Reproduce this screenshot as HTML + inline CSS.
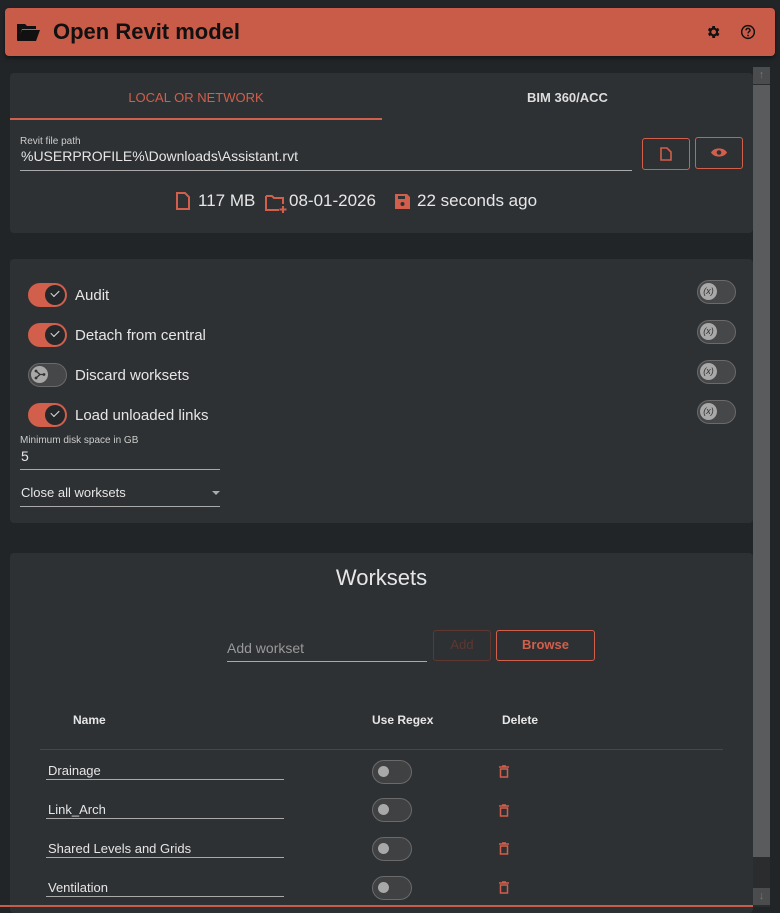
<!DOCTYPE html>
<html><head><meta charset="utf-8"><style>
*{box-sizing:border-box;margin:0;padding:0}
body{width:780px;height:907px;background:#222528;font-family:"Liberation Sans",sans-serif;color:#e6e6e6;position:relative;overflow:hidden}
.a{position:absolute}
.card{position:absolute;background:#2e3134;border-radius:4px}
.hdr{left:5px;top:8px;width:770px;height:48px;background:#c95b49;border-radius:4px;box-shadow:0 2px 4px rgba(0,0,0,.5)}
.red{color:#d15f4b}
.tg{position:absolute;width:39px;height:24px;border-radius:12px}
.on{background:#d15f4b}
.on .c{position:absolute;right:2px;top:2px;width:20px;height:20px;border-radius:50%;background:#25282b}
.on .c::after{content:"";position:absolute;left:6px;top:5px;width:7px;height:4px;border-left:1.5px solid #ddd;border-bottom:1.5px solid #ddd;transform:rotate(-45deg)}
.off{background:#454749;border:1.5px solid #6a6a6a}
.off .k{position:absolute;left:2px;top:2px;width:17px;height:17px;border-radius:50%;background:#a8a8a8;color:#333;font-size:9px;font-style:italic;text-align:center;line-height:17px}
.sm{position:absolute;width:40px;height:24px;border-radius:12px;background:#3f4143;border:1.5px solid #6a6a6a}
.sm .k{position:absolute;left:5px;top:5px;width:11px;height:11px;border-radius:50%;background:#a8a8a8}
.line{position:absolute;height:1px;background:#a9a9a9}
.btn{position:absolute;border:1.5px solid #d15f4b;border-radius:3px}
</style></head><body>
<div class="a hdr">
<svg class="a" style="left:11px;top:14px" width="25" height="20" viewBox="0 0 25 20"><path d="M1 2h8l2 2h9v3H6L2 18H1z M6 8h18l-4 11H1z" fill="#111"/></svg>
<div class="a" style="left:48px;top:11px;font-size:22px;color:#111;font-weight:bold">Open Revit model</div>
<svg class="a" style="left:700px;top:16px" width="16" height="16" viewBox="0 0 24 24"><path fill="#111" d="M19.4 13a7.5 7.5 0 000-2l2.1-1.6-2-3.5-2.5 1a7 7 0 00-1.7-1L15 3h-4l-.4 2.7a7 7 0 00-1.7 1l-2.5-1-2 3.5L6.6 11a7.5 7.5 0 000 2l-2.1 1.6 2 3.5 2.5-1a7 7 0 001.7 1L11 21h4l.4-2.7a7 7 0 001.7-1l2.5 1 2-3.5zM13 15.5a3.5 3.5 0 110-7 3.5 3.5 0 010 7z"/></svg>
<svg class="a" style="left:735px;top:16px" width="16" height="16" viewBox="0 0 24 24"><circle cx="12" cy="12" r="9.5" fill="none" stroke="#111" stroke-width="2.2"/><path d="M9 9.5a3 3 0 116 0c0 2-3 2.2-3 4.5" fill="none" stroke="#111" stroke-width="2.2"/><circle cx="12" cy="17.3" r="1.3" fill="#111"/></svg>
</div>

<div class="a" style="left:753px;top:67px;width:17px;height:840px;background:#2a2c2e"></div>
<div class="a" style="left:753px;top:67px;width:17px;height:17px;background:#4a4c4e;color:#777;font-size:11px;text-align:center;line-height:17px">↑</div>
<div class="a" style="left:753px;top:85px;width:17px;height:772px;background:#5a5b5c"></div>
<div class="a" style="left:753px;top:888px;width:17px;height:17px;background:#4a4c4e;color:#777;font-size:11px;text-align:center;line-height:17px">↓</div>

<div class="card" style="left:10px;top:73px;width:743px;height:160px">
<div class="a red" style="left:0;top:17px;width:372px;text-align:center;font-size:13px">LOCAL OR NETWORK</div>
<div class="a" style="left:372px;top:17px;width:371px;text-align:center;font-size:13px;font-weight:bold;color:#ddd">BIM 360/ACC</div>
<div class="a" style="left:0;top:45px;width:372px;height:2px;background:#d15f4b"></div>
<div class="a" style="left:10px;top:63px;font-size:10px;color:#ccc">Revit file path</div>
<div class="a" style="left:11px;top:75px;font-size:14px">%USERPROFILE%\Downloads\Assistant.rvt</div>
<div class="line" style="left:10px;top:97px;width:612px"></div>
<div class="btn" style="left:632px;top:65px;width:48px;height:32px"><svg class="a" style="left:17px;top:8px" width="12" height="14" viewBox="0 0 12 14"><path d="M1 1h6l4 4v8H1z" fill="none" stroke="#d15f4b" stroke-width="1.6"/></svg></div>
<div class="btn" style="left:685px;top:64px;width:48px;height:32px"><svg class="a" style="left:15px;top:9px" width="16" height="11" viewBox="0 0 16 11"><path d="M0 5.5C3 0 13 0 16 5.5 13 11 3 11 0 5.5z" fill="#d15f4b"/><circle cx="8" cy="5.5" r="2.3" fill="#2e3134"/></svg></div>
<svg class="a" style="left:166px;top:119px" width="14" height="18" viewBox="0 0 14 18"><path d="M1 1h8l4 4v12H1z" fill="none" stroke="#d15f4b" stroke-width="2"/></svg>
<div class="a" style="left:188px;top:118px;font-size:17px">117 MB</div>
<svg class="a" style="left:255px;top:121px" width="22" height="20" viewBox="0 0 22 20"><path d="M1 2h6l2 2h9v6M14 16H1V2" fill="none" stroke="#d15f4b" stroke-width="2"/><path d="M18 12v7M14.5 15.5h7" stroke="#d15f4b" stroke-width="2"/></svg>
<div class="a" style="left:279px;top:118px;font-size:17px">08-01-2026</div>
<svg class="a" style="left:385px;top:121px" width="15" height="15" viewBox="0 0 15 15"><path d="M0 0h12l3 3v12H0z" fill="#d15f4b"/><rect x="3" y="2" width="7" height="3" fill="#2e3134"/><circle cx="7.5" cy="10" r="2" fill="#2e3134"/></svg>
<div class="a" style="left:407px;top:118px;font-size:17px">22 seconds ago</div>
</div>

<div class="card" style="left:10px;top:259px;width:743px;height:264px">
<div class="tg on" style="left:18px;top:24px"><div class="c"></div></div><div class="a" style="left:65px;top:28px;font-size:15px">Audit</div>
<div class="tg on" style="left:18px;top:64px"><div class="c"></div></div><div class="a" style="left:65px;top:68px;font-size:15px">Detach from central</div>
<div class="tg off" style="left:18px;top:104px"><div class="k"><svg width="17" height="17" viewBox="0 0 17 17"><path d="M5 5l4 3.5L5 12M9 8.5h4" stroke="#333" stroke-width="1.3" fill="none"/><circle cx="5" cy="5" r="1.4" fill="#333"/><circle cx="5" cy="12" r="1.4" fill="#333"/><circle cx="13" cy="8.5" r="1.4" fill="#333"/></svg></div></div><div class="a" style="left:65px;top:108px;font-size:15px">Discard worksets</div>
<div class="tg on" style="left:18px;top:144px"><div class="c"></div></div><div class="a" style="left:65px;top:148px;font-size:15px">Load unloaded links</div>
<div class="tg off" style="left:687px;top:21px"><div class="k">(x)</div></div>
<div class="tg off" style="left:687px;top:61px"><div class="k">(x)</div></div>
<div class="tg off" style="left:687px;top:101px"><div class="k">(x)</div></div>
<div class="tg off" style="left:687px;top:141px"><div class="k">(x)</div></div>
<div class="a" style="left:10px;top:176px;font-size:10px;color:#ccc">Minimum disk space in GB</div>
<div class="a" style="left:11px;top:189px;font-size:14px">5</div>
<div class="line" style="left:10px;top:210px;width:200px"></div>
<div class="a" style="left:11px;top:226px;font-size:13px">Close all worksets</div>
<div class="a" style="left:202px;top:232px;border:4px solid transparent;border-top-color:#aaa"></div>
<div class="line" style="left:10px;top:247px;width:200px"></div>
</div>

<div class="card" style="left:10px;top:553px;width:743px;height:360px">
<div class="a" style="left:0;top:12px;width:743px;text-align:center;font-size:22px">Worksets</div>
<div class="a" style="left:217px;top:87px;font-size:14px;color:#999">Add workset</div>
<div class="line" style="left:217px;top:108px;width:200px"></div>
<div class="btn" style="left:423px;top:77px;width:58px;height:31px;border-color:#5e3730;color:#5e3730;text-align:center;line-height:28px;font-size:13px">Add</div>
<div class="btn" style="left:486px;top:77px;width:99px;height:31px;text-align:center;line-height:28px;font-size:13px;color:#d15f4b;font-weight:bold">Browse</div>
<div class="a" style="left:63px;top:160px;font-size:12px;font-weight:bold">Name</div>
<div class="a" style="left:362px;top:160px;font-size:12px;font-weight:bold">Use Regex</div>
<div class="a" style="left:492px;top:160px;font-size:12px;font-weight:bold">Delete</div>
<div class="a" style="left:30px;top:196px;width:683px;height:1px;background:#45484b"></div>
</div>

<div class="a" style="left:48px;top:763px;font-size:13px">Drainage</div>
<div class="a" style="left:48px;top:802px;font-size:13px">Link_Arch</div>
<div class="a" style="left:48px;top:841px;font-size:13px">Shared Levels and Grids</div>
<div class="a" style="left:48px;top:880px;font-size:13px">Ventilation</div>
<div class="line" style="left:46px;top:779px;width:238px"></div>
<div class="line" style="left:46px;top:818px;width:238px"></div>
<div class="line" style="left:46px;top:857px;width:238px"></div>
<div class="line" style="left:46px;top:896px;width:238px"></div>
<div class="sm" style="left:372px;top:760px"><div class="k"></div></div>
<div class="sm" style="left:372px;top:798px"><div class="k"></div></div>
<div class="sm" style="left:372px;top:837px"><div class="k"></div></div>
<div class="sm" style="left:372px;top:876px"><div class="k"></div></div>
<svg class="a" style="left:499px;top:765px" width="10" height="13" viewBox="0 0 10 13"><path d="M0 2h10M3 1h4" stroke="#d15f4b" stroke-width="1.5"/><rect x="1.5" y="4" width="7" height="8" fill="none" stroke="#d15f4b" stroke-width="1.5"/></svg>
<svg class="a" style="left:499px;top:804px" width="10" height="13" viewBox="0 0 10 13"><path d="M0 2h10M3 1h4" stroke="#d15f4b" stroke-width="1.5"/><rect x="1.5" y="4" width="7" height="8" fill="none" stroke="#d15f4b" stroke-width="1.5"/></svg>
<svg class="a" style="left:499px;top:842px" width="10" height="13" viewBox="0 0 10 13"><path d="M0 2h10M3 1h4" stroke="#d15f4b" stroke-width="1.5"/><rect x="1.5" y="4" width="7" height="8" fill="none" stroke="#d15f4b" stroke-width="1.5"/></svg>
<svg class="a" style="left:499px;top:881px" width="10" height="13" viewBox="0 0 10 13"><path d="M0 2h10M3 1h4" stroke="#d15f4b" stroke-width="1.5"/><rect x="1.5" y="4" width="7" height="8" fill="none" stroke="#d15f4b" stroke-width="1.5"/></svg>
<div class="a" style="left:0;top:905px;width:753px;height:2px;background:#c95b49"></div>
</body></html>
